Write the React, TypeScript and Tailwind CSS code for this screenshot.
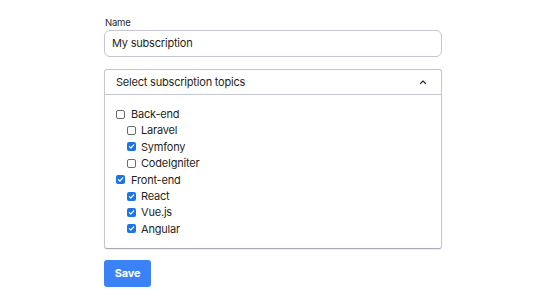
import React from "react";

type Item = { label: string; checked: boolean; indent?: boolean };

const items: Item[] = [
  { label: "Back-end", checked: false },
  { label: "Laravel", checked: false, indent: true },
  { label: "Symfony", checked: true, indent: true },
  { label: "CodeIgniter", checked: false, indent: true },
  { label: "Front-end", checked: true },
  { label: "React", checked: true, indent: true },
  { label: "Vue.js", checked: true, indent: true },
  { label: "Angular", checked: true, indent: true },
];

function Box({ checked }: { checked: boolean }) {
  if (checked) {
    return (
      <span className="flex h-[9px] w-[9px] items-center justify-center rounded-[2px] bg-[#1a73e8]">
        <svg width="7" height="7" viewBox="0 0 10 10" fill="none">
          <path d="M2 5.2L4.1 7.3L8.2 2.6" stroke="white" strokeWidth="1.8" strokeLinecap="round" strokeLinejoin="round" />
        </svg>
      </span>
    );
  }
  return <span className="h-[9px] w-[9px] rounded-[2px] border border-[#6b6b6b] bg-white" />;
}

export default function App() {
  return (
    <div
      className="min-h-[304px] w-[540px] bg-white pt-[17px] tracking-[-0.2px] text-[#1f1f24]"
      style={{ fontFamily: "Inter, 'Noto Sans', sans-serif" }}
    >
      <div className="ml-[104px] flex w-[338px] flex-col">
        <label className="pl-[1px] text-[9.5px] leading-[12px] text-[#2a2a30]">Name</label>
        <div className="mt-[1px] flex h-[27px] items-center rounded-[6px] border border-[#c4c6d0] px-[7px] text-[11px]">
          My subscription
        </div>
        <div className="mt-[12px] flex flex-col rounded-[3px] border border-[#c4c6d0] border-b-[#a9abbb] shadow-[0_1px_1px_rgba(0,0,0,0.08)]">
          <div className="flex h-[25px] items-center justify-between border-b border-[#c4c6d0] pl-[11px] pr-[14px] text-[11px]">
            <span>Select subscription topics</span>
            <svg width="8" height="6" viewBox="0 0 8 6" fill="none">
              <path d="M1.5 4.5L4 2L6.5 4.5" stroke="#333" strokeWidth="1.2" strokeLinecap="round" strokeLinejoin="round" />
            </svg>
          </div>
          <div className="flex flex-col pb-[11px] pl-[11px] pt-[11px]">
            {items.map((it) => (
              <div
                key={it.label}
                className={`flex h-[16.4px] items-center text-[11px] ${it.indent ? "pl-[11px] gap-[5px]" : "gap-[6px]"}`}
              >
                <Box checked={it.checked} />
                <span>{it.label}</span>
              </div>
            ))}
          </div>
        </div>
        <button className="mt-[11px] flex h-[27px] w-[47px] items-center justify-center rounded-[3px] bg-[#3b82f6] text-[11px] font-bold text-white">
          Save
        </button>
      </div>
    </div>
  );
}
